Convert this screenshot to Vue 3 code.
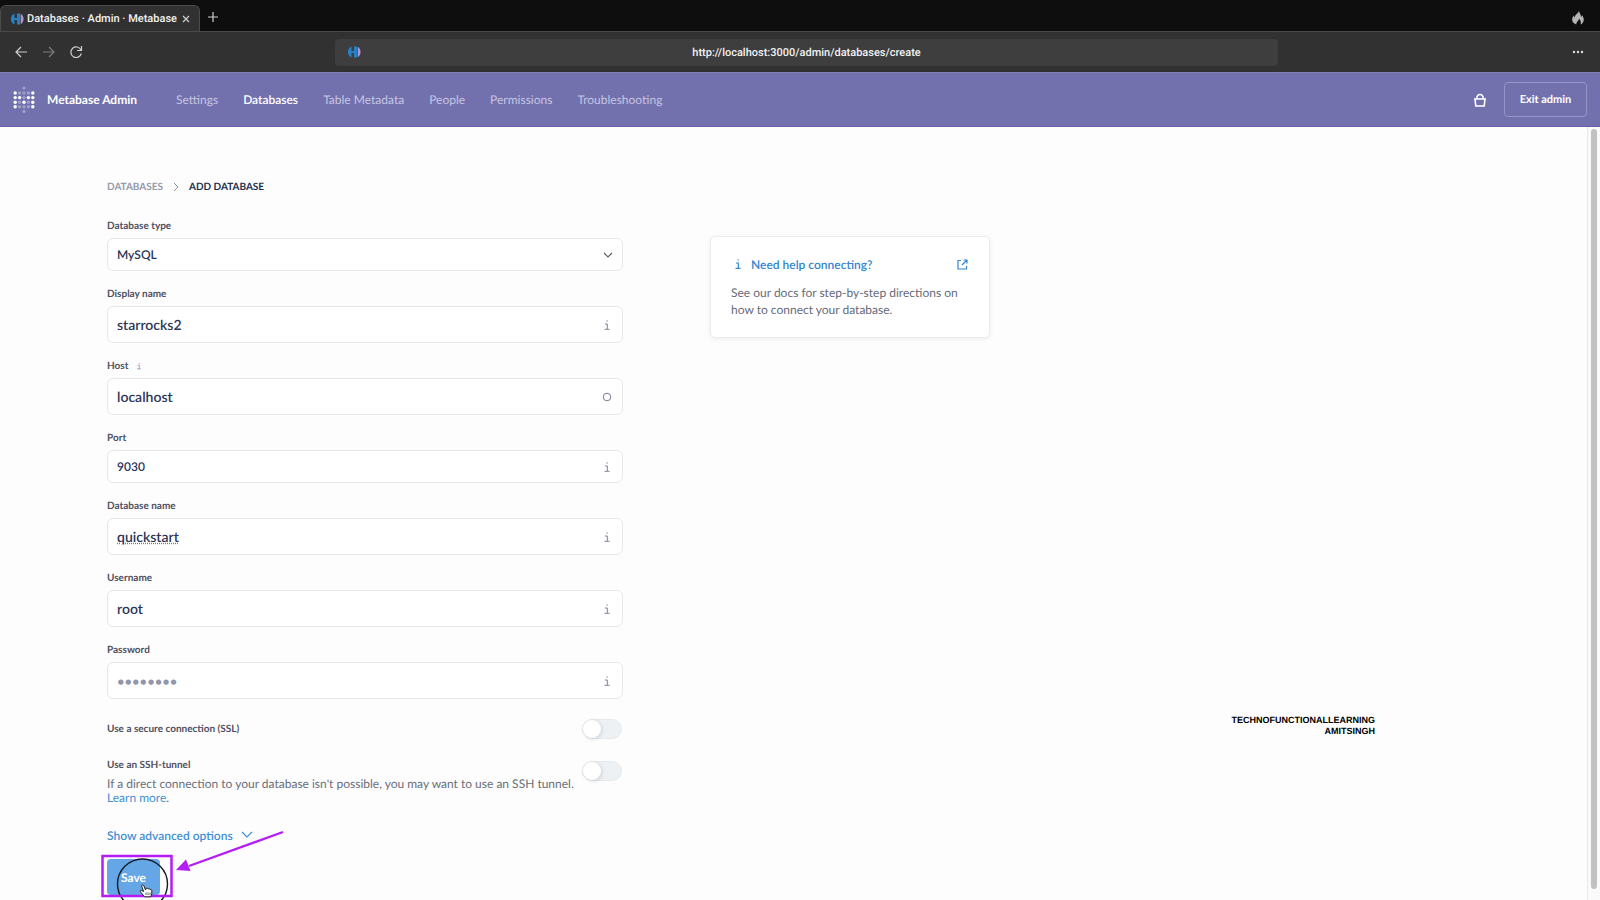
<script setup>
import { ref, reactive } from "vue";

const navItems = ["Settings", "Databases", "Table Metadata", "People", "Permissions", "Troubleshooting"];
const activeItem = ref("Databases");

const engine = ref("MySQL");
const fields = reactive([
  { id: "name", label: "Display name", value: "starrocks2", icon: "info" },
  { id: "host", label: "Host", value: "localhost", icon: "circle", hint: true },
  { id: "port", label: "Port", value: "9030", icon: "info", small: true },
  { id: "dbname", label: "Database name", value: "quickstart", icon: "info", misspelled: true },
  { id: "user", label: "Username", value: "root", icon: "info" },
  { id: "password", label: "Password", value: "", icon: "info", placeholder: "••••••••" },
]);
const ssl = ref(false);
const tunnel = ref(false);

// logo dots: 1 = bright, 0 = dim
const logoRows = [
  [1, 0, 0, 0, 1],
  [1, 1, 0, 1, 1],
  [1, 0, 1, 0, 1],
  [1, 0, 0, 0, 1],
];
</script>

<template>
  <div class="window">
    <div class="tabs">
      <div class="tab">
        <svg class="favicon" viewBox="0 0 14 12">
          <path d="M4.500.5A6 6 0 0 0 4.500 11.500V7H7v4.500h3V.5H7V5H4.500z" fill="#2580c6" />
          <path d="M10.700.8c3.800 2 3.800 8.400 0 10.400z" fill="#b493cf" />
        </svg>
        <span class="tab-title">Databases · Admin · Metabase</span>
        <button class="icon-btn" aria-label="Close tab">
          <svg width="8" height="8" viewBox="0 0 8 8"><path d="M1 1l6 6M7 1L1 7" /></svg>
        </button>
      </div>
      <button class="icon-btn plus" aria-label="New tab">
        <svg width="12" height="12" viewBox="0 0 12 12"><path d="M6 1v10M1 6h10" /></svg>
      </button>
      <svg class="flame" viewBox="0 0 12 14">
        <path d="M7 0c.3 2.500 2 3 2 6 .7-.5.900-1.300.9-2C11.500 6 12 8 11.700 9.500 11.300 11.500 10 13 8.500 13.500 9.500 11 8.500 9.500 7 7.500 7 10 4.500 10 4.300 13.500 1.500 12.700 0 10.500.2 8.300.3 6.500 1 5.500 1.800 4.500c0 1 .2 1.700.8 2.200C2.700 3.500 6 3 7 0z" />
      </svg>
    </div>

    <div class="toolbar">
      <div class="history">
        <button class="icon-btn" aria-label="Back">
          <svg width="14" height="14" viewBox="0 0 14 14"><path d="M12 7H1M6 2L1 7l5 5" /></svg>
        </button>
        <button class="icon-btn dim" aria-label="Forward">
          <svg width="14" height="14" viewBox="0 0 14 14"><path d="M1 7h11M7 2l5 5-5 5" /></svg>
        </button>
        <button class="icon-btn" aria-label="Reload">
          <svg width="14" height="14" viewBox="0 0 14 14"><path d="M12 5A5.300 5.300 0 1 0 12.300 8.500M12.500 1v4.500H8" /></svg>
        </button>
      </div>
      <div class="address">
        <svg class="favicon" viewBox="0 0 14 12">
          <path d="M4.500.5A6 6 0 0 0 4.500 11.500V7H7v4.500h3V.5H7V5H4.500z" fill="#2580c6" />
          <path d="M10.700.8c3.800 2 3.800 8.400 0 10.400z" fill="#b493cf" />
        </svg>
        <input type="text" aria-label="Address" value="http://localhost:3000/admin/databases/create" />
      </div>
      <button class="icon-btn more" aria-label="More">
        <svg width="12" height="4" viewBox="0 0 12 4">
          <circle cx="2" cy="2" r="1.200" /><circle cx="6" cy="2" r="1.200" /><circle cx="10" cy="2" r="1.200" />
        </svg>
      </button>
    </div>

    <header class="admin-nav">
      <a href="#" class="brand">
        <svg width="22" height="28" viewBox="0 0 22 28">
          <circle cx="11" cy="2" r="1.600" class="dot-dim" />
          <template v-for="(row, y) in logoRows" :key="y">
            <circle
              v-for="(on, x) in row"
              :key="x"
              :cx="2.2 + x * 4.4"
              :cy="7 + y * 4.6"
              r="1.700"
              :class="on ? 'dot' : 'dot-dim'"
            />
          </template>
          <circle cx="11" cy="25.400" r="1.600" class="dot-dim" />
        </svg>
        <span>Metabase Admin</span>
      </a>
      <nav>
        <a
          v-for="item in navItems"
          :key="item"
          href="#"
          :class="{ active: item === activeItem }"
          @click.prevent="activeItem = item"
          >{{ item }}</a
        >
      </nav>
      <button class="store" aria-label="Store">
        <svg width="14" height="14" viewBox="0 0 14 14">
          <path d="M1 6h12M2 6l.8 7h8.400L12 6M3.800 5.500C4 .2 10 .2 10.200 5.500" />
        </svg>
      </button>
      <button class="exit">Exit admin</button>
    </header>

    <main>
      <div class="content">
        <div class="crumbs">
          <a href="#">DATABASES</a>
          <svg width="6" height="10" viewBox="0 0 6 10"><path d="M1 1l4 4-4 4" /></svg>
          <span>ADD DATABASE</span>
        </div>

        <div class="columns">
          <form @submit.prevent>
            <div class="field">
              <label for="engine">Database type</label>
              <div class="control small">
                <select id="engine" v-model="engine">
                  <option>MySQL</option>
                </select>
                <svg class="chevron" width="10" height="6" viewBox="0 0 10 6"><path d="M1 1l4 4 4-4" /></svg>
              </div>
            </div>

            <div v-for="field in fields" :key="field.id" class="field">
              <label :for="field.id">
                {{ field.label }}
                <svg v-if="field.hint" class="hint" width="4" height="8" viewBox="0 0 6 10">
                  <path d="M1 4h2.500v5M0 9.300h6M2.500 1h1.500" />
                </svg>
              </label>
              <div class="control" :class="{ small: field.small, misspelled: field.misspelled }">
                <input :id="field.id" v-model="field.value" type="text" :placeholder="field.placeholder" spellcheck="false" />
                <svg v-if="field.icon === 'circle'" class="ring" width="10" height="10" viewBox="0 0 10 10">
                  <circle cx="5" cy="5" r="3.800" />
                </svg>
                <svg v-else class="info" width="6" height="10" viewBox="0 0 6 10">
                  <path d="M1 4h2.300v5M.5 9.300h5M2.400 1h1.400" />
                </svg>
              </div>
            </div>

            <div class="switch-row ssl">
              <label for="ssl">Use a secure connection (SSL)</label>
              <input id="ssl" v-model="ssl" type="checkbox" />
            </div>

            <div class="switch-row tunnel">
              <div>
                <label for="tunnel">Use an SSH-tunnel</label>
                <p>
                  If a direct connection to your database isn't possible, you may want to use an SSH tunnel.<br />
                  <a href="#">Learn more</a>.
                </p>
              </div>
              <input id="tunnel" v-model="tunnel" type="checkbox" />
            </div>

            <button type="button" class="advanced">
              Show advanced options
              <svg width="12" height="8" viewBox="0 0 12 8"><path d="M1 1l5 5 5-5" /></svg>
            </button>

            <div class="save-wrap">
              <button type="submit" class="save">Save</button>
              <!-- click marker, frame and arrow -->
              <svg class="marker" width="190" height="86" viewBox="0 0 190 86">
                <circle cx="41.500" cy="55" r="25" fill="none" stroke="#171a24" stroke-width="1.400" />
                <rect x="1.500" y="27" width="69" height="40" fill="none" stroke="#b41cf5" stroke-width="2.500" />
                <path d="M182 3L88 37" stroke="#b41cf5" stroke-width="2.200" />
                <path d="M75 41l10-10.500 4.500 11.500z" fill="#b41cf5" />
                <path
                  d="M40.500 56.500c1-1 2-.5 2.500.5l1.500 4 .5-1.500c1-.6 1.800-.3 2 .5.900-.6 1.700-.2 2 .6.900-.5 1.800 0 1.800 1.200v3l-1 3h-6.300L40 63.500c-1.500-1.500-.5-2.500.6-2l2 1z"
                  fill="#fff"
                  stroke="#222"
                />
                <path d="M45 63.500v2.500M47 63.500v2.500M49 63.500v2.500" stroke="#222" stroke-width=".7" />
              </svg>
            </div>
          </form>

          <aside>
            <a href="#" class="help-title">
              <svg class="info" width="6" height="10" viewBox="0 0 6 10"><path d="M1 4h2.300v5M.5 9.300h5M2.400 1h1.400" /></svg>
              <span>Need help connecting?</span>
              <svg width="11" height="11" viewBox="0 0 11 11">
                <path d="M4 1.500H1v8.500h8.500V7M6.500 1H10v3.500M10 1L5 6" />
              </svg>
            </a>
            <p>See our docs for step-by-step directions on how to connect your database.</p>
          </aside>
        </div>
      </div>
      <div class="scrollbar"><div class="thumb"></div></div>
      <div class="watermark">TECHNOFUNCTIONALLEARNING<br />AMITSINGH</div>
    </main>
  </div>
</template>

<style>
body {
  background: #fdfdfd;
}
</style>

<style scoped>
* {
  box-sizing: border-box;
}
.window {
  display: flex;
  flex-direction: column;
  height: 100vh;
  overflow: hidden;
  font-family: Lato, sans-serif;
  font-size: 12px;
  text-rendering: geometricPrecision;
  color: #4c5773;
}
a {
  text-decoration: none;
  color: inherit;
}
button {
  padding: 0;
  border: 0;
  background: none;
  font: inherit;
  color: inherit;
}
input,
select,
button {
  text-rendering: inherit;
}
svg {
  flex: none;
  fill: none;
}
p {
  margin: 0;
}

/* browser chrome */
.tabs {
  display: flex;
  align-items: center;
  height: 31px;
  flex: none;
  padding-right: 16px;
  background: #0e0e0e;
}
.tab {
  display: flex;
  align-items: center;
  align-self: flex-end;
  width: 200px;
  height: 26px;
  padding: 0 9px;
  border: 1px solid #4a4a4a;
  border-bottom: 0;
  border-radius: 6px 6px 0 0;
  background: #313131;
}
.favicon {
  width: 14px;
  height: 12px;
}
.tab-title {
  flex: 1;
  margin: 0 3px;
  overflow: hidden;
  white-space: nowrap;
  font-family: Roboto, sans-serif;
  font-size: 11px;
  font-weight: 500;
  color: #f2f2f2;
}
.icon-btn {
  display: flex;
}
.icon-btn path {
  stroke: #cfcfcf;
  stroke-width: 1.2;
}
.icon-btn.dim path {
  stroke: #7d7d7d;
}
.plus {
  margin: 3px 0 0 7px;
}
.flame {
  width: 12px;
  height: 14px;
  margin: 4px 0 0 auto;
  fill: #b4b4b4;
}
.toolbar {
  display: flex;
  align-items: center;
  height: 41px;
  flex: none;
  padding: 0 16px 0 15px;
  border-top: 1px solid #494949;
  background: #313131;
}
.history {
  display: flex;
  flex: 0 0 320px;
  gap: 13px;
}
.address {
  display: flex;
  align-items: center;
  flex: 1;
  height: 27px;
  padding: 0 12px;
  border-radius: 4px;
  background: #3e3e3e;
}
.address input {
  flex: 1;
  padding: 0 14px 0 0;
  border: 0;
  outline: 0;
  background: none;
  text-align: center;
  font-family: Roboto, sans-serif;
  font-size: 11px;
  font-weight: 500;
  color: #f2f2f2;
}
.more {
  flex: 0 0 306px;
  justify-content: flex-end;
}
.more circle {
  fill: #dedede;
}

/* admin header */
.admin-nav {
  display: flex;
  align-items: center;
  height: 55px;
  flex: none;
  padding: 0 13px;
  border-top: 1px solid #8480b6;
  border-bottom: 1px solid #6560a5;
  background: #7271ad;
  color: #fff;
}
.brand {
  display: flex;
  align-items: center;
  gap: 12px;
  font-weight: 700;
}
.dot {
  fill: #fff;
}
.dot-dim {
  fill: #9f9dcb;
}
nav {
  display: flex;
  flex: 1;
  gap: 25px;
  margin-left: 39px;
}
nav a {
  color: #c6c5e3;
}
nav a.active {
  color: #fff;
  font-weight: 600;
}
.store {
  display: flex;
  margin-right: 17px;
}
.store path {
  stroke: #fff;
  stroke-width: 1.6;
}
.exit {
  width: 83px;
  height: 35px;
  border: 1px solid #9694c8;
  border-radius: 4px;
  font-size: 11px;
  font-weight: 700;
}

/* page */
main {
  position: relative;
  display: flex;
  flex: 1;
  min-height: 0;
  overflow: hidden;
}
.content {
  flex: 1;
  padding: 52px 107px 0;
}
.crumbs {
  display: flex;
  align-items: center;
  gap: 10px;
  height: 16px;
  margin-bottom: 23px;
  font-size: 10px;
  font-weight: 700;
  color: #22304f;
}
.crumbs a {
  color: #949aab;
}
.crumbs path {
  stroke: #8a8f9f;
}
.columns {
  display: flex;
  align-items: flex-start;
  gap: 87px;
}
form {
  width: 516px;
}
.field {
  margin-bottom: 15px;
}
label {
  display: block;
  font-size: 10px;
  line-height: 16px;
  font-weight: 700;
  color: #504f60;
}
.hint {
  margin-left: 6px;
  vertical-align: middle;
}
.hint path,
.info path {
  stroke: #817f98;
}
.control {
  display: flex;
  align-items: center;
  height: 37px;
  margin-top: 4px;
  padding: 0 12px 0 9px;
  border: 1px solid #e6e7ea;
  border-radius: 6px;
  background: #fff;
}
.control input,
.control select {
  flex: 1;
  min-width: 0;
  padding: 0;
  border: 0;
  outline: 0;
  appearance: none;
  background: none;
  font-family: Lato, sans-serif;
  font-size: 14px;
  font-weight: 600;
  color: #2b3556;
}
.control.small {
  height: 33px;
}
.control.small input,
.control.small select {
  font-size: 12px;
}
.control input::placeholder {
  font-size: 13px;
  color: #9196ad;
}
.misspelled input {
  text-decoration: underline dotted #e5485a;
}
.chevron {
  margin-right: -3px;
}
.chevron path {
  stroke: #5f606b;
  stroke-width: 1.2;
}
.ring {
  margin-right: -2px;
}
.ring circle {
  stroke: #7d7c92;
}
.switch-row {
  display: flex;
  align-items: center;
  justify-content: space-between;
  padding-right: 1px;
}
.ssl {
  margin-top: 20px;
}
.tunnel {
  align-items: flex-start;
  margin-top: 18px;
}
.tunnel p {
  margin-top: 4px;
  line-height: 14px;
  color: #696e7b;
}
.tunnel p a,
.advanced {
  color: #3f8fd3;
}
.tunnel > div {
  width: 470px;
}
.switch-row input {
  width: 40px;
  height: 20px;
  flex: none;
  margin: 0;
  appearance: none;
  border: 1px solid #e7eaed;
  border-radius: 10px;
  background: #edf1f4;
}
.switch-row input::before {
  content: "";
  display: block;
  width: 18px;
  height: 18px;
  border-radius: 50%;
  background: #fff;
  box-shadow: 1px 1px 4px #0002;
}
.switch-row input:checked::before {
  margin-left: auto;
}
.tunnel input {
  margin-top: 4px;
}
.advanced {
  display: flex;
  align-items: center;
  gap: 8px;
  height: 16px;
  margin-top: 22px;
  font-weight: 600;
}
.advanced path {
  stroke: #3f8fd3;
  stroke-width: 1.2;
}
.save-wrap {
  position: relative;
  margin-top: 16px;
}
.save {
  width: 53px;
  height: 36px;
  border-radius: 4px;
  background: #64a6e6;
  color: #fff;
  font-weight: 700;
}
.marker {
  position: absolute;
  left: -6px;
  top: -30px;
  pointer-events: none;
}
aside {
  width: 280px;
  height: 102px;
  margin-top: 18px;
  padding: 19px 20px;
  border: 1px solid #ececef;
  border-radius: 5px;
  background: #fff;
  box-shadow: 0 1px 5px #0001;
}
.help-title {
  display: flex;
  align-items: center;
  gap: 10px;
  height: 16px;
  padding: 0 1px 0 4px;
  font-weight: 600;
  color: #3186d2;
}
.help-title span {
  flex: 1;
}
.help-title path {
  stroke: #3186d2;
  stroke-width: 1.2;
}
aside p {
  margin-top: 12px;
  line-height: 17px;
  color: #666b79;
}
.scrollbar {
  width: 13px;
  padding: 2px 3px 11px;
  border-left: 1px solid #e9e9e9;
  background: #fafafa;
}
.thumb {
  height: 100%;
  border-radius: 3px;
  background: #c2c2c2;
}
.watermark {
  position: absolute;
  right: 225px;
  bottom: 163px;
  text-align: right;
  font-family: "Liberation Sans", sans-serif;
  font-size: 9px;
  line-height: 11px;
  font-weight: 700;
  color: #000;
}
</style>
